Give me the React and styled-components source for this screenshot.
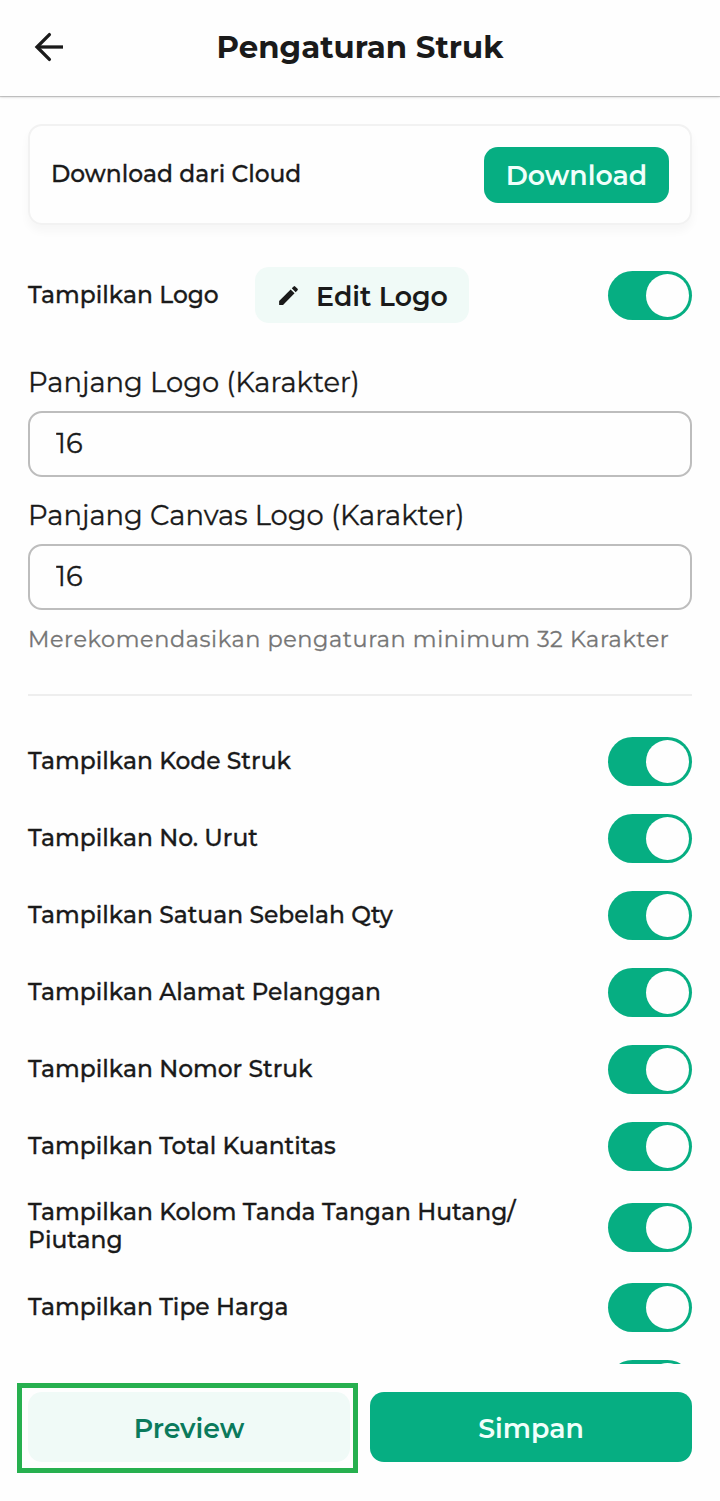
import { useState } from "react";
import styled, { createGlobalStyle } from "styled-components";
import { MdEdit } from "react-icons/md";

const GlobalStyle = createGlobalStyle`
  * {
    box-sizing: border-box;
  }

  body {
    margin: 0;
    background: #fefefe;
    color: #1a1a1a;
    font-family: Montserrat, Inter, sans-serif;
  }

  button, input {
    font-family: inherit;
    color: inherit;
  }
`;

const Screen = styled.div`
  display: flex;
  flex-direction: column;
  width: 720px;
  height: 1501px;
  overflow: hidden;
`;

const Header = styled.header`
  display: grid;
  grid-template-columns: 72px 1fr 72px;
  align-items: center;
  flex: none;
  height: 96px;
  padding-bottom: 2px;
  background: #fefefe;
  box-shadow: 0 1px 1px rgba(0, 0, 0, 0.18), 0 1px 3px rgba(0, 0, 0, 0.14);
`;

const BackButton = styled.button`
  display: flex;
  padding: 0 0 0 34px;
  border: 0;
  background: none;
`;

const Title = styled.h1`
  margin: 0;
  text-align: center;
  font-size: 30.8px;
  line-height: 40px;
  font-weight: 700;
`;

const Content = styled.main`
  flex: none;
  height: 1268px;
  padding: 28px 28px 0;
  overflow: hidden;
`;

const Card = styled.section`
  display: flex;
  align-items: center;
  justify-content: space-between;
  height: 101px;
  padding: 0 21px;
  border: 2px solid #f2f2f2;
  border-radius: 14px;
  box-shadow: 0 6px 10px rgba(0, 0, 0, 0.035);
`;

const Label = styled.span`
  padding-bottom: ${(p) => p.$lift ?? 2}px;
  font-size: 23.4px;
  line-height: 28px;
  font-weight: 500;
  -webkit-text-stroke: 0.3px;
  white-space: pre-line;
`;

const Button = styled.button`
  display: flex;
  align-items: center;
  justify-content: center;
  width: ${(p) => p.$width}px;
  height: ${(p) => p.$height ?? 56}px;
  padding: ${(p) => p.$drop ?? 0}px 0 0;
  border: 0;
  border-radius: 14px;
  background: ${(p) => (p.$soft ? "#f0faf7" : "#06ae82")};
  color: ${(p) => p.$color ?? "#f0fffb"};
  font-size: 26.8px;
  font-weight: 600;

  svg {
    margin: 0 15px 2px 0;
  }
`;

const LogoRow = styled.div`
  display: grid;
  grid-template-columns: 227px 1fr auto;
  align-items: center;
  height: 56px;
  margin-top: 42px;
`;

const Field = styled.label`
  display: block;
  margin-top: ${(p) => p.$gap}px;
`;

const FieldName = styled.span`
  display: block;
  margin-bottom: 12px;
  font-size: 27.4px;
  line-height: 34px;
  -webkit-text-stroke: 0.3px;
`;

const Input = styled.input`
  display: block;
  width: 100%;
  height: 66px;
  padding: 0 26px 3px;
  border: 2px solid #bdbdbd;
  border-radius: 14px;
  background: #fefefe;
  font-size: 27.4px;
  -webkit-text-stroke: 0.3px;
  outline: none;
`;

const Hint = styled.p`
  margin: 14px 0 0;
  font-size: 22.4px;
  line-height: 30px;
  letter-spacing: 0.6px;
  -webkit-text-stroke: 0.3px;
  color: #757575;
`;

const Divider = styled.hr`
  height: 2px;
  margin: 40px 0 41px;
  border: 0;
  background: #eeeeee;
`;

const List = styled.div`
  display: flex;
  flex-direction: column;
  gap: 28px;
`;

const Row = styled.div`
  display: flex;
  align-items: center;
  justify-content: space-between;
  height: ${(p) => (p.$tall ? 56 : 49)}px;
`;

const Track = styled.button`
  display: flex;
  justify-content: ${(p) => (p.$on ? "flex-end" : "flex-start")};
  align-items: center;
  flex: none;
  width: 84px;
  height: 49px;
  padding: 3px;
  border: 0;
  border-radius: 25px;
  background: ${(p) => (p.$on ? "#06ae82" : "#bdbdbd")};
`;

const Thumb = styled.span`
  width: 43px;
  height: 43px;
  border-radius: 50%;
  background: #fefefe;
`;

const Footer = styled.footer`
  display: flex;
  align-items: baseline;
  gap: 12px;
  padding: 19px 28px 0 17px;
`;

const Highlight = styled.div`
  padding: 4px 3px 6px 6px;
  border: 5px solid #27b04f;
`;

const settings = [
  { name: "Tampilkan Kode Struk" },
  { name: "Tampilkan No. Urut" },
  { name: "Tampilkan Satuan Sebelah Qty" },
  { name: "Tampilkan Alamat Pelanggan" },
  { name: "Tampilkan Nomor Struk" },
  { name: "Tampilkan Total Kuantitas" },
  { name: "Tampilkan Kolom Tanda Tangan Hutang/\nPiutang", tall: true },
  { name: "Tampilkan Tipe Harga" },
  { name: "" },
];

function Toggle() {
  const [on, setOn] = useState(true);
  return (
    <Track type="button" role="switch" aria-checked={on} $on={on} onClick={() => setOn(!on)}>
      <Thumb />
    </Track>
  );
}

function BackArrow() {
  return (
    <svg width="30" height="30" viewBox="0 0 30 30" fill="none" stroke="#1a1a1a" strokeWidth="3.3">
      <path d="M29 15H3" />
      <path d="M15.4 2.6L3 15l12.4 12.4" strokeLinecap="round" />
    </svg>
  );
}

function App() {
  return (
    <>
      <GlobalStyle />
      <Screen>
        <Header>
          <BackButton type="button">
            <BackArrow />
          </BackButton>
          <Title>Pengaturan Struk</Title>
        </Header>
        <Content>
          <Card>
            <Label>Download dari Cloud</Label>
            <Button type="button" $width={185} $drop={1}>Download</Button>
          </Card>
          <LogoRow>
            <Label $lift={1}>Tampilkan Logo</Label>
            <Button type="button" $width={214} $drop={2} $soft $color="#1a1a1a">
              <MdEdit size={25} />
              Edit Logo
            </Button>
            <Toggle />
          </LogoRow>
          <Field $gap={42}>
            <FieldName>Panjang Logo (Karakter)</FieldName>
            <Input defaultValue="16" />
          </Field>
          <Field $gap={21}>
            <FieldName>Panjang Canvas Logo (Karakter)</FieldName>
            <Input defaultValue="16" />
          </Field>
          <Hint>Merekomendasikan pengaturan minimum 32 Karakter</Hint>
          <Divider />
          <List>
            {settings.map((s) => (
              <Row key={s.name} $tall={s.tall}>
                <Label>{s.name}</Label>
                <Toggle />
              </Row>
            ))}
          </List>
        </Content>
        <Footer>
          <Highlight>
            <Button type="button" $width={322} $height={70} $drop={2} $soft $color="#0b7a5c">Preview</Button>
          </Highlight>
          <Button type="button" $width={322} $height={70} $drop={2}>Simpan</Button>
        </Footer>
      </Screen>
    </>
  );
}

export default App;
